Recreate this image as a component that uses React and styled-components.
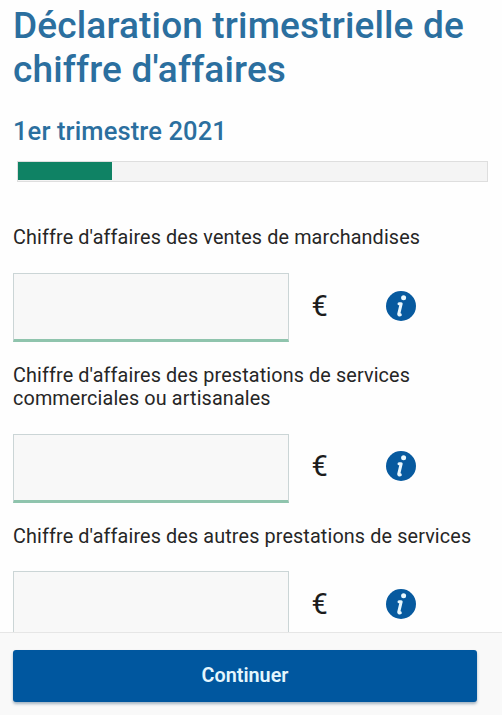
import React from "react";
import styled, { createGlobalStyle } from "styled-components";

const GlobalStyle = createGlobalStyle`
  * { box-sizing: border-box; }
  body { margin: 0; background: #fefefe; font-family: Roboto, sans-serif; overflow: hidden; }
`;

const Screen = styled.div`
  display: flex;
  flex-direction: column;
  height: 715px;
  width: 502px;
  overflow: hidden;
`;

const Content = styled.main`
  flex: 1;
  min-height: 0;
  overflow: hidden;
  padding: 4px 14px 0 13px;
`;

const Title = styled.h1`
  margin: 0;
  font-size: 37px;
  line-height: 44px;
  font-weight: 500;
  letter-spacing: 0.15px;
  color: #2b6f9f;
  white-space: nowrap;
`;

const Quarter = styled.h2`
  margin: 24px 0 0;
  font-size: 25.5px;
  line-height: 30px;
  font-weight: 500;
  letter-spacing: 0.12px;
  color: #2b6f9f;
`;

const ProgressTrack = styled.div`
  margin: 15px 0 44px 4px;
  height: 21px;
  border: 1px solid #dedede;
  background: #f4f4f4;
`;

const ProgressFill = styled.div`
  width: 94px;
  height: 18px;
  background: #0f8264;
`;

const Field = styled.section`
  margin-bottom: 22px;
`;

const Label = styled.label`
  display: block;
  margin-bottom: 24px;
  font-size: 19.8px;
  line-height: 23px;
  letter-spacing: 0.13px;
  color: #262626;
  white-space: nowrap;

  ${Field} + ${Field} & { margin-bottom: 23.5px; }
`;

const InputRow = styled.div`
  display: flex;
  align-items: center;
  height: 69px;
`;

const AmountInput = styled.input`
  width: 276px;
  height: 69px;
  padding: 0 12px;
  border: 1.5px solid #cbd5d6;
  border-bottom: 3px solid #8fc4ad;
  border-radius: 0;
  background: #f8f8f8;
  font: 20px Roboto, sans-serif;
  outline: none;
`;

const Currency = styled.span`
  width: 97px;
  margin-bottom: 4px;
  padding-left: 22.5px;
  font-size: 29px;
  line-height: 32px;
  color: #1c1c1c;
`;

const InfoButton = styled.button`
  display: flex;
  padding: 0;
  border: 0;
  background: none;
  margin-bottom: 4px;
`;

const Footer = styled.footer`
  height: 83px;
  padding: 17px 25px 0 13px;
  border-top: 1px solid #e6e6e6;
  background: #f9f9f9;
`;

const ContinueButton = styled.button`
  display: block;
  width: 464px;
  height: 52px;
  padding: 0 0 2px;
  border: 0;
  border-radius: 3px;
  background: #00579f;
  box-shadow: 0 2px 3px rgba(0, 50, 90, 0.35);
  color: #e4f6fd;
  font: 600 19.8px Roboto, sans-serif;
`;

function InfoIcon() {
  return (
    <svg width="30" height="30" viewBox="0 0 30 30" aria-hidden="true">
      <circle cx="15" cy="15" r="15" fill="#075a9f" />
      <circle cx="17.6" cy="6.7" r="2.5" fill="#e8f8fe" />
      <path
        d="M13 12.7 H15.2 L12.7 23.2 Q12.6 24.3 14.3 23.9"
        fill="none"
        stroke="#e8f8fe"
        strokeWidth="3"
        strokeLinecap="round"
        strokeLinejoin="round"
      />
    </svg>
  );
}

const fields = [
  { id: "ventes", lines: ["Chiffre d'affaires des ventes de marchandises"] },
  { id: "commerciales", lines: ["Chiffre d'affaires des prestations de services", "commerciales ou artisanales"] },
  { id: "autres", lines: ["Chiffre d'affaires des autres prestations de services"] },
];

export default function App() {
  return (
    <Screen>
      <GlobalStyle />
      <Content>
        <Title>Déclaration trimestrielle de<br />chiffre d'affaires</Title>
        <Quarter>1er trimestre 2021</Quarter>
        <ProgressTrack><ProgressFill /></ProgressTrack>
        {fields.map(({ id, lines }) => (
          <Field key={id}>
            <Label htmlFor={id}>
              {lines.map((line, i) => (
                <React.Fragment key={line}>{i > 0 && <br />}{line}</React.Fragment>
              ))}
            </Label>
            <InputRow>
              <AmountInput id={id} inputMode="numeric" />
              <Currency>€</Currency>
              <InfoButton type="button" aria-label="Information"><InfoIcon /></InfoButton>
            </InputRow>
          </Field>
        ))}
      </Content>
      <Footer><ContinueButton type="button">Continuer</ContinueButton></Footer>
    </Screen>
  );
}
